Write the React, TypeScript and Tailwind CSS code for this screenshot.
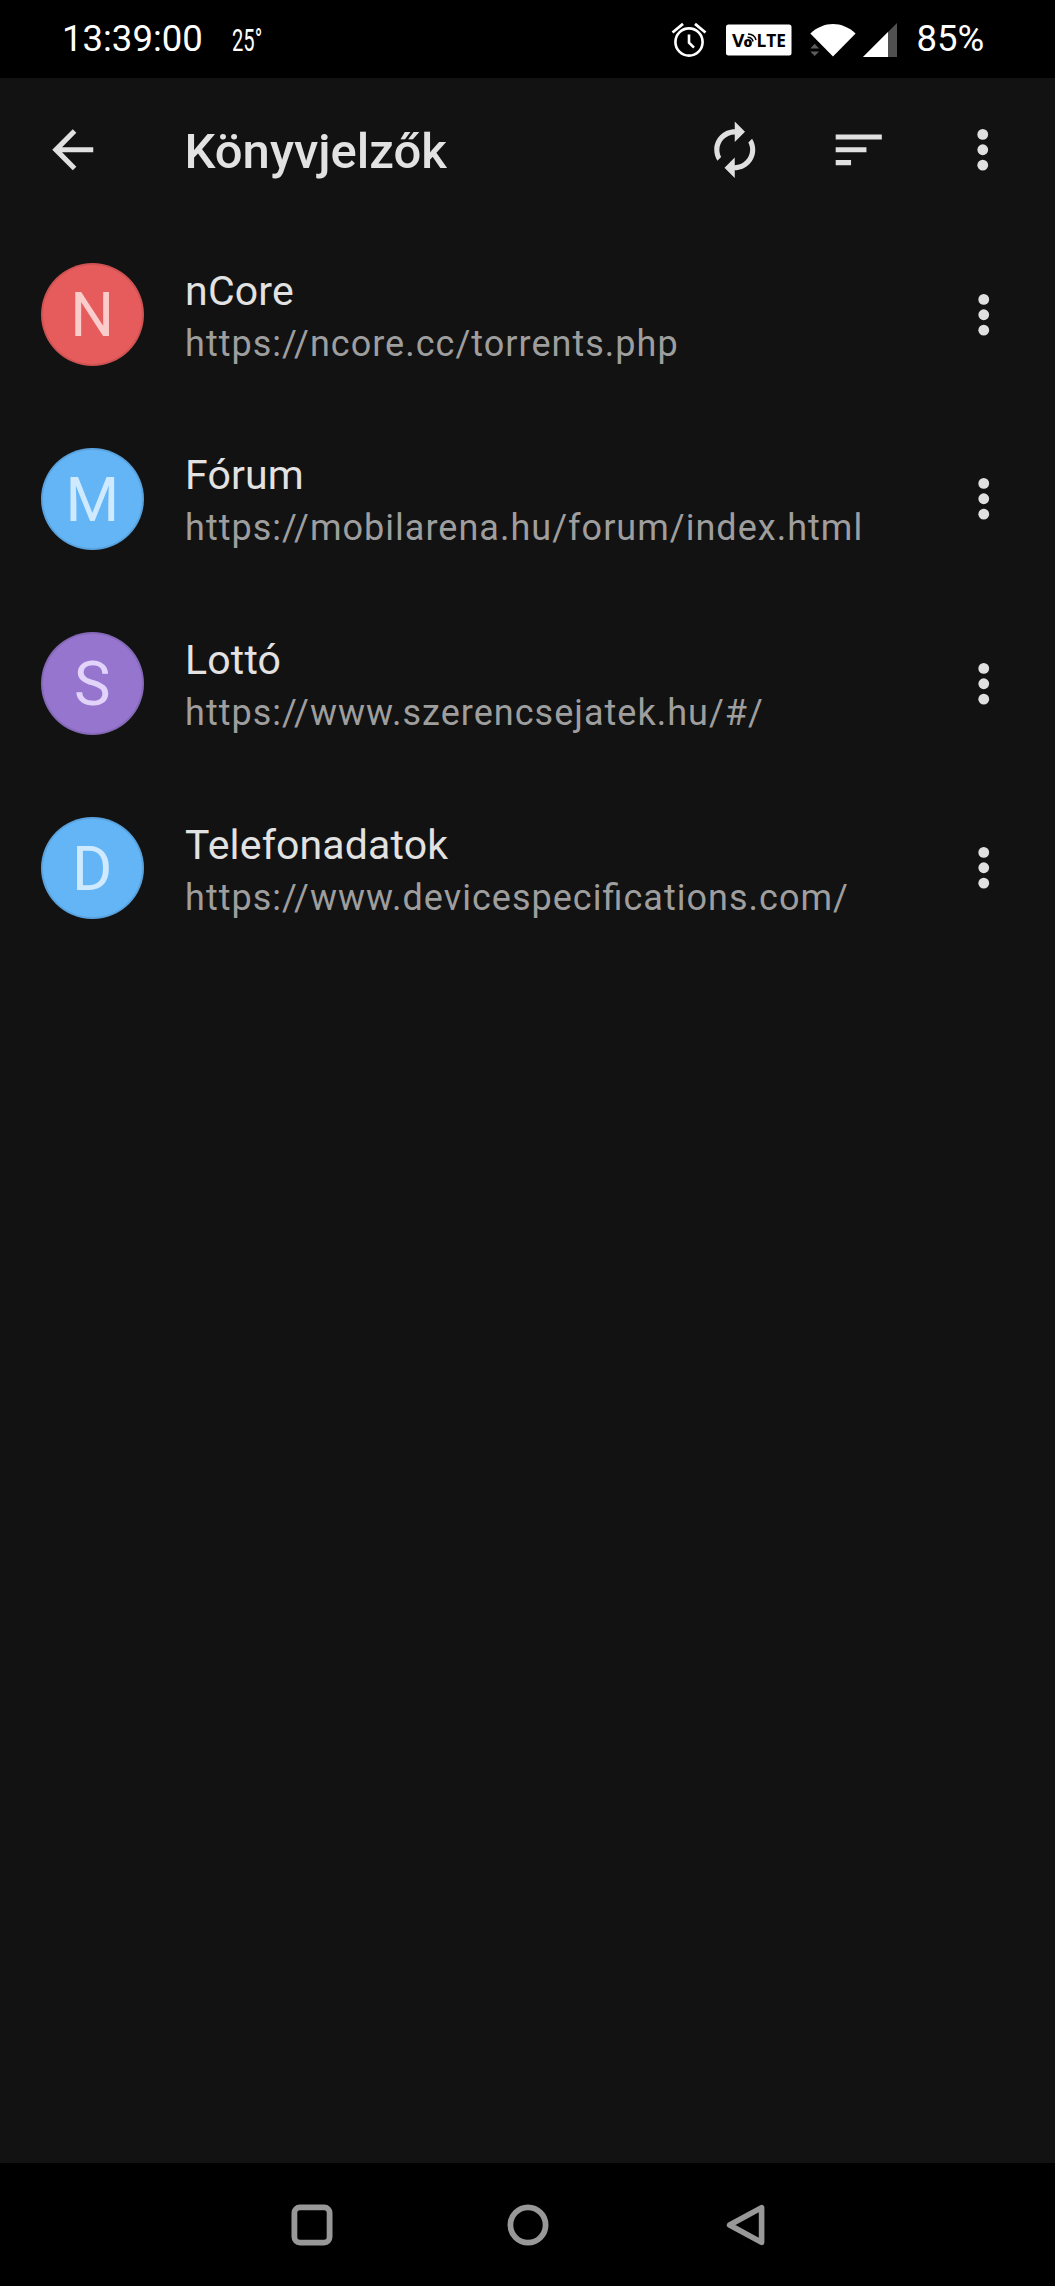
import type { ReactNode } from "react";

type Bookmark = {
  letter: string;
  color: string;
  title: string;
  url: string;
};

const bookmarks: Bookmark[] = [
  {
    letter: "N",
    color: "bg-[#e65c5c] text-[#fbcccc]",
    title: "nCore",
    url: "https://ncore.cc/torrents.php",
  },
  {
    letter: "M",
    color: "bg-[#64b5f6] text-[#cfeaff]",
    title: "Fórum",
    url: "https://mobilarena.hu/forum/index.html",
  },
  {
    letter: "S",
    color: "bg-[#9575cd] text-[#e2d3fb]",
    title: "Lottó",
    url: "https://www.szerencsejatek.hu/#/",
  },
  {
    letter: "D",
    color: "bg-[#64b5f6] text-[#cfeaff]",
    title: "Telefonadatok",
    url: "https://www.devicespecifications.com/",
  },
];

function Icon({ children }: { children: ReactNode }) {
  return (
    <svg viewBox="0 0 24 24" className="size-[61.5px] shrink-0 fill-[#e0e0e0]">
      {children}
    </svg>
  );
}

function MoreIcon() {
  return (
    <Icon>
      <circle cx="12" cy="6" r="2.1" />
      <circle cx="12" cy="12" r="2.1" />
      <circle cx="12" cy="18" r="2.1" />
    </Icon>
  );
}

function AlarmIcon() {
  return (
    <svg viewBox="0 0 36 36" className="ml-[411px] h-9 w-9 fill-none stroke-white">
      <circle cx="18" cy="20" r="13.6" strokeWidth="2.6" />
      <path d="M1.5 10.5 12 1.8M34.5 10.5 24 1.8" strokeWidth="2.8" />
      <path d="M18 12.5v8.2l5 5" strokeWidth="2.6" />
    </svg>
  );
}

function VolteIcon() {
  return (
    <svg viewBox="0 0 66 32" className="ml-[18.5px] h-8 w-[66px]">
      <rect y="0.5" width="65.5" height="31" rx="2.5" fill="#fff" />
      <g fontFamily="Open Sans, sans-serif" fontWeight="700" fill="#000">
        <text x="6" y="23" fontSize="18.5" textLength="12.5" lengthAdjust="spacingAndGlyphs">V</text>
        <text x="17.5" y="23" fontSize="14" fontWeight="800">o</text>
        <text x="30.5" y="23" fontSize="18.5" textLength="29.5" lengthAdjust="spacingAndGlyphs">LTE</text>
      </g>
      <path d="M21.5 13.2q4.6 0 5.6 4.3M22 10q6.6.2 8 6" fill="none" stroke="#000" strokeWidth="1.5" />
    </svg>
  );
}

function WifiIcon() {
  return (
    <svg viewBox="0 0 46 34" className="ml-[18.5px] h-[34px] w-[46px]">
      <path d="M0.3 10.5C14-2.2 32-2.2 45.6 10.5L23 33.6z" fill="#fff" />
      <path d="M.3 25.6 4.7 20.8 9.1 25.6zM.3 28.4H9.1L4.7 33z" fill="#5c5c5c" />
    </svg>
  );
}

function SignalIcon() {
  return (
    <svg viewBox="0 0 34 34" className="ml-[7px] h-[34px] w-[34px]">
      <path d="M0 34 34 0v34z" fill="#505050" />
      <path d="M0 34 25 9v25z" fill="#fff" />
    </svg>
  );
}

function StatusBar() {
  return (
    <div className="flex h-[78px] shrink-0 items-center bg-black pt-[2px] text-[36.5px] leading-none text-white">
      <span className="ml-[62px] w-[170px] pb-px">13:39:00</span>
      <span className="w-[28px] origin-left scale-x-[0.63] text-[32px]">25°</span>
      <AlarmIcon />
      <VolteIcon />
      <WifiIcon />
      <SignalIcon />
      <span className="ml-[19.5px] pb-px">85%</span>
    </div>
  );
}

function AppBar() {
  return (
    <header className="flex h-[144px] shrink-0 items-center pr-[42px] pl-[42px]">
      <Icon>
        <path d="M20 11H7.83l5.59-5.59L12 4l-8 8 8 8 1.41-1.41L7.83 13H20v-2z" />
      </Icon>
      <h1 className="ml-[81px] flex-1 pt-[3px] text-[49px] leading-none font-medium">Könyvjelzők</h1>
      <div className="flex gap-[62.5px]">
        <Icon>
          <path d="M12 6v3l4-4-4-4v3c-4.42 0-8 3.58-8 8 0 1.57.46 3.03 1.24 4.26L6.7 14.8c-.45-.83-.7-1.79-.7-2.8 0-3.31 2.69-6 6-6zm6.76 1.74L17.3 9.2c.44.84.7 1.79.7 2.8 0 3.31-2.69 6-6 6v-3l-4 4 4 4v-3c4.42 0 8-3.58 8-8 0-1.57-.46-3.03-1.24-4.26z" />
        </Icon>
        <Icon>
          <path d="M3 18h6v-2H3v2zM3 6v2h18V6H3zm0 7h12v-2H3v2z" />
        </Icon>
        <MoreIcon />
      </div>
    </header>
  );
}

function BookmarkRow({ item }: { item: Bookmark }) {
  return (
    <li className="flex h-[184.6px] items-center pr-[41px] pl-[41px]">
      <div
        className={`flex size-[102.6px] shrink-0 items-center justify-center rounded-full border-2 border-black/10 pt-[3px] text-[61.5px] leading-none ${item.color}`}
      >
        {item.letter}
      </div>
      <div className="ml-[41.5px] flex-1 pt-[5px]">
        <p className="text-[41px] leading-[54px] tracking-[0.15px]">{item.title}</p>
        <p className="text-[36px] leading-[52px] tracking-[1.02px] text-[#9e9e9e] [font-feature-settings:'liga']">
          {item.url}
        </p>
      </div>
      <MoreIcon />
    </li>
  );
}

function NavBar() {
  return (
    <nav className="flex h-[123px] shrink-0 items-center justify-center bg-black">
      <svg viewBox="0 0 42 42" className="size-[42px] fill-none stroke-[#989898]">
        <rect x="3.4" y="3.4" width="35.2" height="35.2" rx="5.5" strokeWidth="5.8" />
      </svg>
      <svg viewBox="0 0 42 42" className="mx-[174px] size-[42px] fill-none stroke-[#989898]">
        <circle cx="21" cy="21" r="17.6" strokeWidth="5.8" />
      </svg>
      <svg viewBox="0 0 42 42" className="size-[42px] fill-none stroke-[#989898]">
        <path d="M38.6 3.6v34.8L6.6 21z" strokeWidth="5.6" strokeLinejoin="round" />
      </svg>
    </nav>
  );
}

export default function App() {
  return (
    <div className="flex h-[2286px] w-[1055px] flex-col overflow-hidden bg-[#121212] font-['Roboto',sans-serif] text-[#e2e2e2]">
      <StatusBar />
      <AppBar />
      <ul className="flex-1">
        {bookmarks.map((item) => (
          <BookmarkRow key={item.title} item={item} />
        ))}
      </ul>
      <NavBar />
    </div>
  );
}
